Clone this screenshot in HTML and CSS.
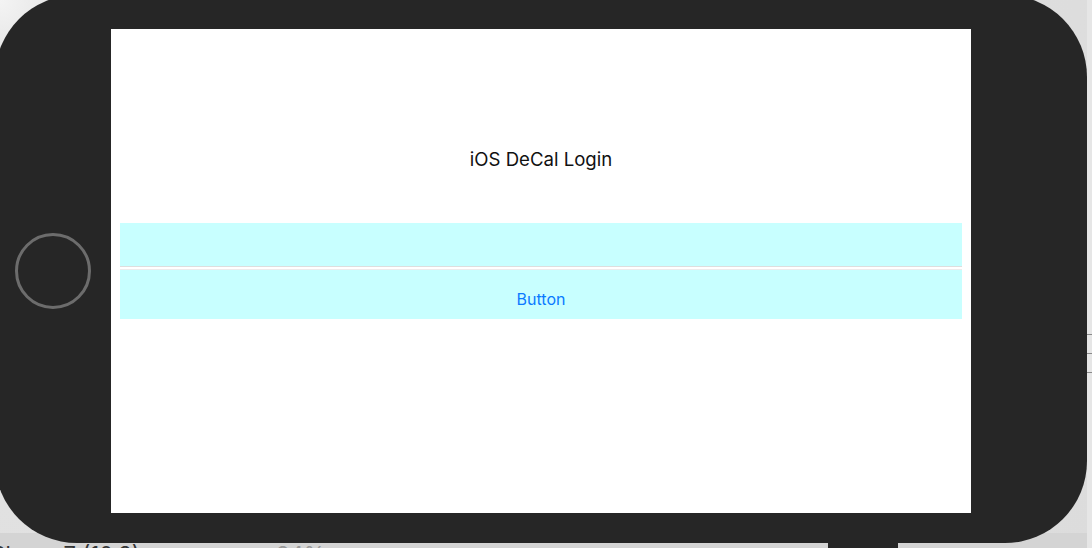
FILE: index.html
```html
<!DOCTYPE html>
<html>
<head>
<meta charset="utf-8">
<link rel="stylesheet" href="styles.css">
<title>iOS DeCal Login</title>
</head>
<body>
<div class="desk">
  <div class="desk-bottom">
    <span class="dev">iPhone 7 (10.3)</span>
    <span class="zoom">84%</span>
  </div>
  <div class="desk-right">
    <span class="rline"></span><span class="rline"></span><span class="rline"></span>
  </div>
  <div class="side-btn side-top"></div>
  <div class="side-btn side-bottom"></div>
  <div class="phone">
    <div class="bezel">
      <div class="home"></div>
    </div>
    <div class="screen">
      <div class="title">iOS DeCal Login</div>
      <div class="form">
        <div class="field-top"></div>
        <div class="field"></div>
        <div class="btn-row"><span class="btn">Button</span></div>
      </div>
    </div>
    <div class="bezel"></div>
  </div>
</div>
</body>
</html>
```

FILE: styles.css
```css
html, body {
  margin: 0;
  padding: 0;
  width: 1092px;
  height: 548px;
  overflow: hidden;
}
body {
  background: #e2e2e2;
  font-family: Inter, "Liberation Sans", sans-serif;
}
.desk {
  position: relative;
  width: 1092px;
  height: 548px;
  overflow: hidden;
  background: radial-gradient(circle at 0 0, #f4f4f4 0, #e4e4e4 60px, #dcdcdc 100%);
}
.desk-bottom {
  position: absolute;
  left: 0;
  top: 533px;
  width: 1092px;
  height: 20px;
  background: #d4d4d4;
  font-size: 22px;
  line-height: 26px;
  color: #333;
}
.dev {
  position: absolute;
  left: -14px;
  top: 8px;
}
.zoom {
  position: absolute;
  left: 276px;
  top: 8px;
  color: #999;
}
.desk-right {
  position: absolute;
  left: 1087px;
  top: 0;
  width: 5px;
  height: 548px;
  background: #e6e6e6;
  display: flex;
  flex-direction: column;
  padding-top: 334px;
  box-sizing: border-box;
  gap: 18px;
}
.rline {
  display: block;
  height: 1px;
  background: #8a8a8a;
}
.side-btn {
  position: absolute;
  background: #262626;
}
.side-top {
  left: 745px;
  top: -3px;
  width: 70px;
  height: 4px;
  background: #3a3a3a;
}
.side-bottom {
  left: 828px;
  top: 540px;
  width: 70px;
  height: 8px;
}
.phone {
  position: relative;
  margin: -5px 0 0 -5px;
  width: 1092px;
  height: 548px;
  box-sizing: border-box;
  background: #262626;
  border-radius: 82px;
  display: flex;
  align-items: stretch;
  padding: 34px 0 30px;
}
.bezel {
  width: 116px;
  display: flex;
  align-items: center;
  justify-content: center;
}
.home {
  width: 70px;
  height: 70px;
  border-radius: 50%;
  border: 3px solid #6c6c6c;
}
.screen {
  width: 860px;
  height: 484px;
  background: #ffffff;
  box-sizing: border-box;
  padding: 0 9px;
  display: flex;
  flex-direction: column;
}
.title {
  margin-top: 119px;
  height: 22px;
  line-height: 22px;
  text-align: center;
  font-size: 18.6px;
  color: #111;
}
.form {
  margin-top: 53px;
  display: flex;
  flex-direction: column;
}
.field-top {
  height: 43px;
  background: #c8ffff;
}
.field {
  height: 2px;
  background: #ffffff;
  border-top: 1px solid #dedede;
  border-bottom: 1px solid #ececec;
}
.btn-row {
  height: 49px;
  background: #c8ffff;
  display: flex;
  justify-content: center;
  align-items: flex-start;
}
.btn {
  margin-top: 19px;
  font-size: 16px;
  line-height: 20px;
  color: #0a7aff;
}
```
